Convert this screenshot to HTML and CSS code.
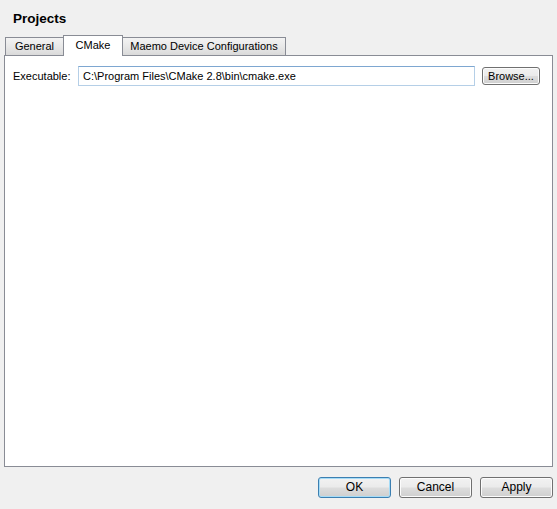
FILE: index.html
```html
<!DOCTYPE html>
<html>
<head>
<meta charset="utf-8">
<link rel="stylesheet" href="styles.css">
</head>
<body>
<div class="dialog">
  <div class="title">Projects</div>
  <div class="tabbar">
    <div class="tab t-general">General</div>
    <div class="tab t-cmake active">CMake</div>
    <div class="tab t-maemo">Maemo Device Configurations</div>
  </div>
  <div class="pane">
    <div class="row">
      <span class="label">Executable:</span>
      <div class="input">C:\Program Files\CMake 2.8\bin\cmake.exe</div>
      <div class="btn browse">Browse...</div>
    </div>
  </div>
  <div class="footer">
    <div class="btn big default">OK</div>
    <div class="btn big">Cancel</div>
    <div class="btn big">Apply</div>
  </div>
</div>
</body>
</html>
```
FILE: styles.css
```css
html, body {
  margin: 0;
  padding: 0;
  background: #f0f0f0;
  font-family: "Liberation Sans", Arial, sans-serif;
  font-size: 11px;
  color: #000;
}
.dialog {
  width: 557px;
  height: 509px;
  display: flex;
  flex-direction: column;
}
.title {
  font-weight: bold;
  font-size: 13.5px;
  padding: 11px 0 0 13px;
  box-sizing: border-box;
  height: 35px;
}
.tabbar {
  display: flex;
  align-items: flex-end;
  padding-left: 5px;
  height: 20px;
  position: relative;
  z-index: 1;
}
.tab {
  box-sizing: border-box;
  height: 18px;
  line-height: 17px;
  border: 1px solid #898c95;
  border-bottom: none;
  background: linear-gradient(#f3f3f3, #e8e8e8 50%, #dadada);
  text-align: center;
  margin-right: -1px;
}
.t-general { width: 59px; }
.t-cmake { width: 60px; }
.t-maemo { width: 164px; }
.tab.active {
  height: 21px;
  line-height: 19px;
  background: #fff;
  margin-bottom: -1px;
  position: relative;
  z-index: 2;
}
.pane {
  margin-left: 4px;
  width: 549px;
  height: 412px;
  box-sizing: border-box;
  background: #fff;
  border: 1px solid #898c95;
}
.row {
  display: flex;
  align-items: center;
  padding: 10px 0 0 8px;
}
.label {
  width: 65px;
}
.input {
  box-sizing: border-box;
  width: 397px;
  height: 20px;
  line-height: 18px;
  border: 1px solid #b5cfe7;
  border-top-color: #7ea7d1;
  padding-left: 4px;
}
.btn {
  box-sizing: border-box;
  border: 1px solid #707070;
  border-radius: 3px;
  background: linear-gradient(#f2f2f2, #ebebeb 48%, #dddddd 52%, #cfcfcf);
  box-shadow: inset 0 0 0 1px #fcfcfc;
  text-align: center;
}
.browse {
  margin-left: 7px;
  width: 58px;
  height: 18px;
  line-height: 16px;
}
.footer {
  display: flex;
  justify-content: flex-end;
  gap: 8px;
  padding: 10px 4px 0 0;
}
.big {
  width: 73px;
  height: 21px;
  line-height: 19px;
  font-size: 12px;
}
.default {
  border-color: #3c7fb1;
  box-shadow: inset 0 0 0 1px #a6dcf7;
}
```
